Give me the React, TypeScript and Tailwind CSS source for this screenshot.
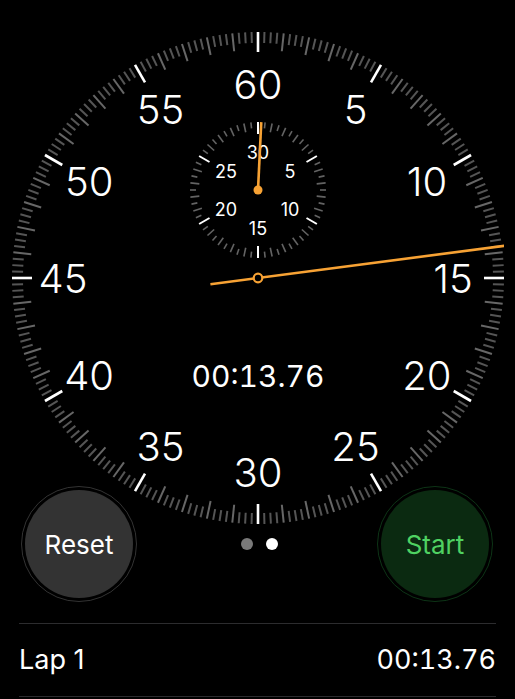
import React from "react";

const ORANGE = "#f7a234";
const FONT = "Inter, 'Noto Sans', sans-serif";

// main dial: 240 quarter-second ticks, svg is 492x492, centre at 246,246
function MainDial() {
  const cx = 246;
  const cy = 246;
  const R = 246;
  const ticks = [];
  for (let i = 0; i < 240; i++) {
    const a = (i / 240) * Math.PI * 2;
    const major = i % 20 === 0;
    const second = i % 4 === 0;
    const len = major ? 20 : second ? 18 : 11;
    const s = Math.sin(a);
    const c = -Math.cos(a);
    ticks.push(
      <line
        key={i}
        x1={cx + s * R}
        y1={cy + c * R}
        x2={cx + s * (R - len)}
        y2={cy + c * (R - len)}
        stroke={major ? "#ffffff" : second ? "#676767" : "#555555"}
        strokeWidth={major ? 2.6 : 2}
      />
    );
  }

  const nums = [60, 5, 10, 15, 20, 25, 30, 35, 40, 45, 50, 55].map((n, i) => {
    const a = (i / 12) * Math.PI * 2;
    return (
      <text
        key={n}
        x={cx + Math.sin(a) * 195}
        y={cy - Math.cos(a) * 194}
        textAnchor="middle"
        dominantBaseline="central"
        fill="#fff"
        fontSize={40}
        fontWeight={300}
        fontFamily={FONT}
      >
        {n}
      </text>
    );
  });

  // sub dial (minutes) centre
  const sx = 246;
  const sy = 158;
  const r = 68;
  const subTicks = [];
  for (let i = 0; i < 60; i++) {
    const a = (i / 60) * Math.PI * 2;
    const major = i % 10 === 0;
    const len = major ? 12 : i % 2 === 0 ? 9 : 6;
    const s = Math.sin(a);
    const c = -Math.cos(a);
    subTicks.push(
      <line
        key={i}
        x1={sx + s * r}
        y1={sy + c * r}
        x2={sx + s * (r - len)}
        y2={sy + c * (r - len)}
        stroke={major ? "#ffffff" : "#636363"}
        strokeWidth={major ? 2 : 1.6}
      />
    );
  }
  const subNums = [30, 5, 10, 15, 20, 25].map((n, i) => {
    const a = (i / 6) * Math.PI * 2;
    return (
      <text
        key={n}
        x={sx + Math.sin(a) * 37}
        y={sy - Math.cos(a) * 38}
        textAnchor="middle"
        dominantBaseline="central"
        fill="#fff"
        fontSize={18}
        fontFamily={FONT}
      >
        {n}
      </text>
    );
  });

  // hands: 13.76s
  const secA = (13.76 / 60) * Math.PI * 2;
  const minA = (13.76 / 1800) * Math.PI * 2;

  return (
    <svg width={492} height={492} viewBox="0 0 492 492">
      {ticks}
      {nums}
      {subTicks}
      {subNums}
      <text
        x={cx}
        y={344}
        textAnchor="middle"
        dominantBaseline="central"
        fill="#fff"
        fontSize={30}
        fontFamily={FONT}
        style={{ fontVariantNumeric: "tabular-nums" }}
      >
        00:13.76
      </text>
      <line
        x1={sx}
        y1={sy}
        x2={sx + Math.sin(minA) * 68}
        y2={sy - Math.cos(minA) * 68}
        stroke={ORANGE}
        strokeWidth={2.6}
      />
      <circle cx={sx} cy={sy} r={4.5} fill={ORANGE} />
      <line
        x1={cx - Math.sin(secA) * 48}
        y1={cy + Math.cos(secA) * 48}
        x2={cx + Math.sin(secA) * 250}
        y2={cy - Math.cos(secA) * 250}
        stroke={ORANGE}
        strokeWidth={2.6}
      />
      <circle cx={cx} cy={cy} r={4.3} fill="#000" stroke={ORANGE} strokeWidth={2.2} />
    </svg>
  );
}

function RoundButton({ label, green }: { label: string; green?: boolean }) {
  return (
    <div
      className={`flex h-[116px] w-[116px] items-center justify-center rounded-full border-[1.5px] ${
        green ? "border-[#0d3416]" : "border-[#333333]"
      }`}
    >
      <div
        className={`flex h-[108px] w-[108px] items-center justify-center rounded-full text-[26px] ${
          green ? "bg-[#0b2a11] text-[#4fd262]" : "bg-[#333333] text-white"
        }`}
      >
        {label}
      </div>
    </div>
  );
}

export default function App() {
  return (
    <div
      className="h-[699px] w-[515px] overflow-hidden bg-black text-white"
      style={{ fontFamily: FONT }}
    >
      <div className="pl-[12px] pt-[32px]">
        <MainDial />
      </div>
      <div className="mt-[-38px] flex items-center justify-between pl-[21px] pr-[22px]">
        <RoundButton label="Reset" />
        <div className="flex items-center gap-[13px] pl-[4px]">
          <span className="h-[12px] w-[12px] rounded-full bg-[#7a7a7a]" />
          <span className="h-[12px] w-[12px] rounded-full bg-white" />
        </div>
        <RoundButton label="Start" green />
      </div>
      <div className="mx-[19px] mt-[21px] border-y border-[#2c2c2e]">
        <div className="flex h-[72px] items-center justify-between text-[27px]">
          <span>Lap 1</span>
          <span className="tabular-nums">00:13.76</span>
        </div>
      </div>
    </div>
  );
}
